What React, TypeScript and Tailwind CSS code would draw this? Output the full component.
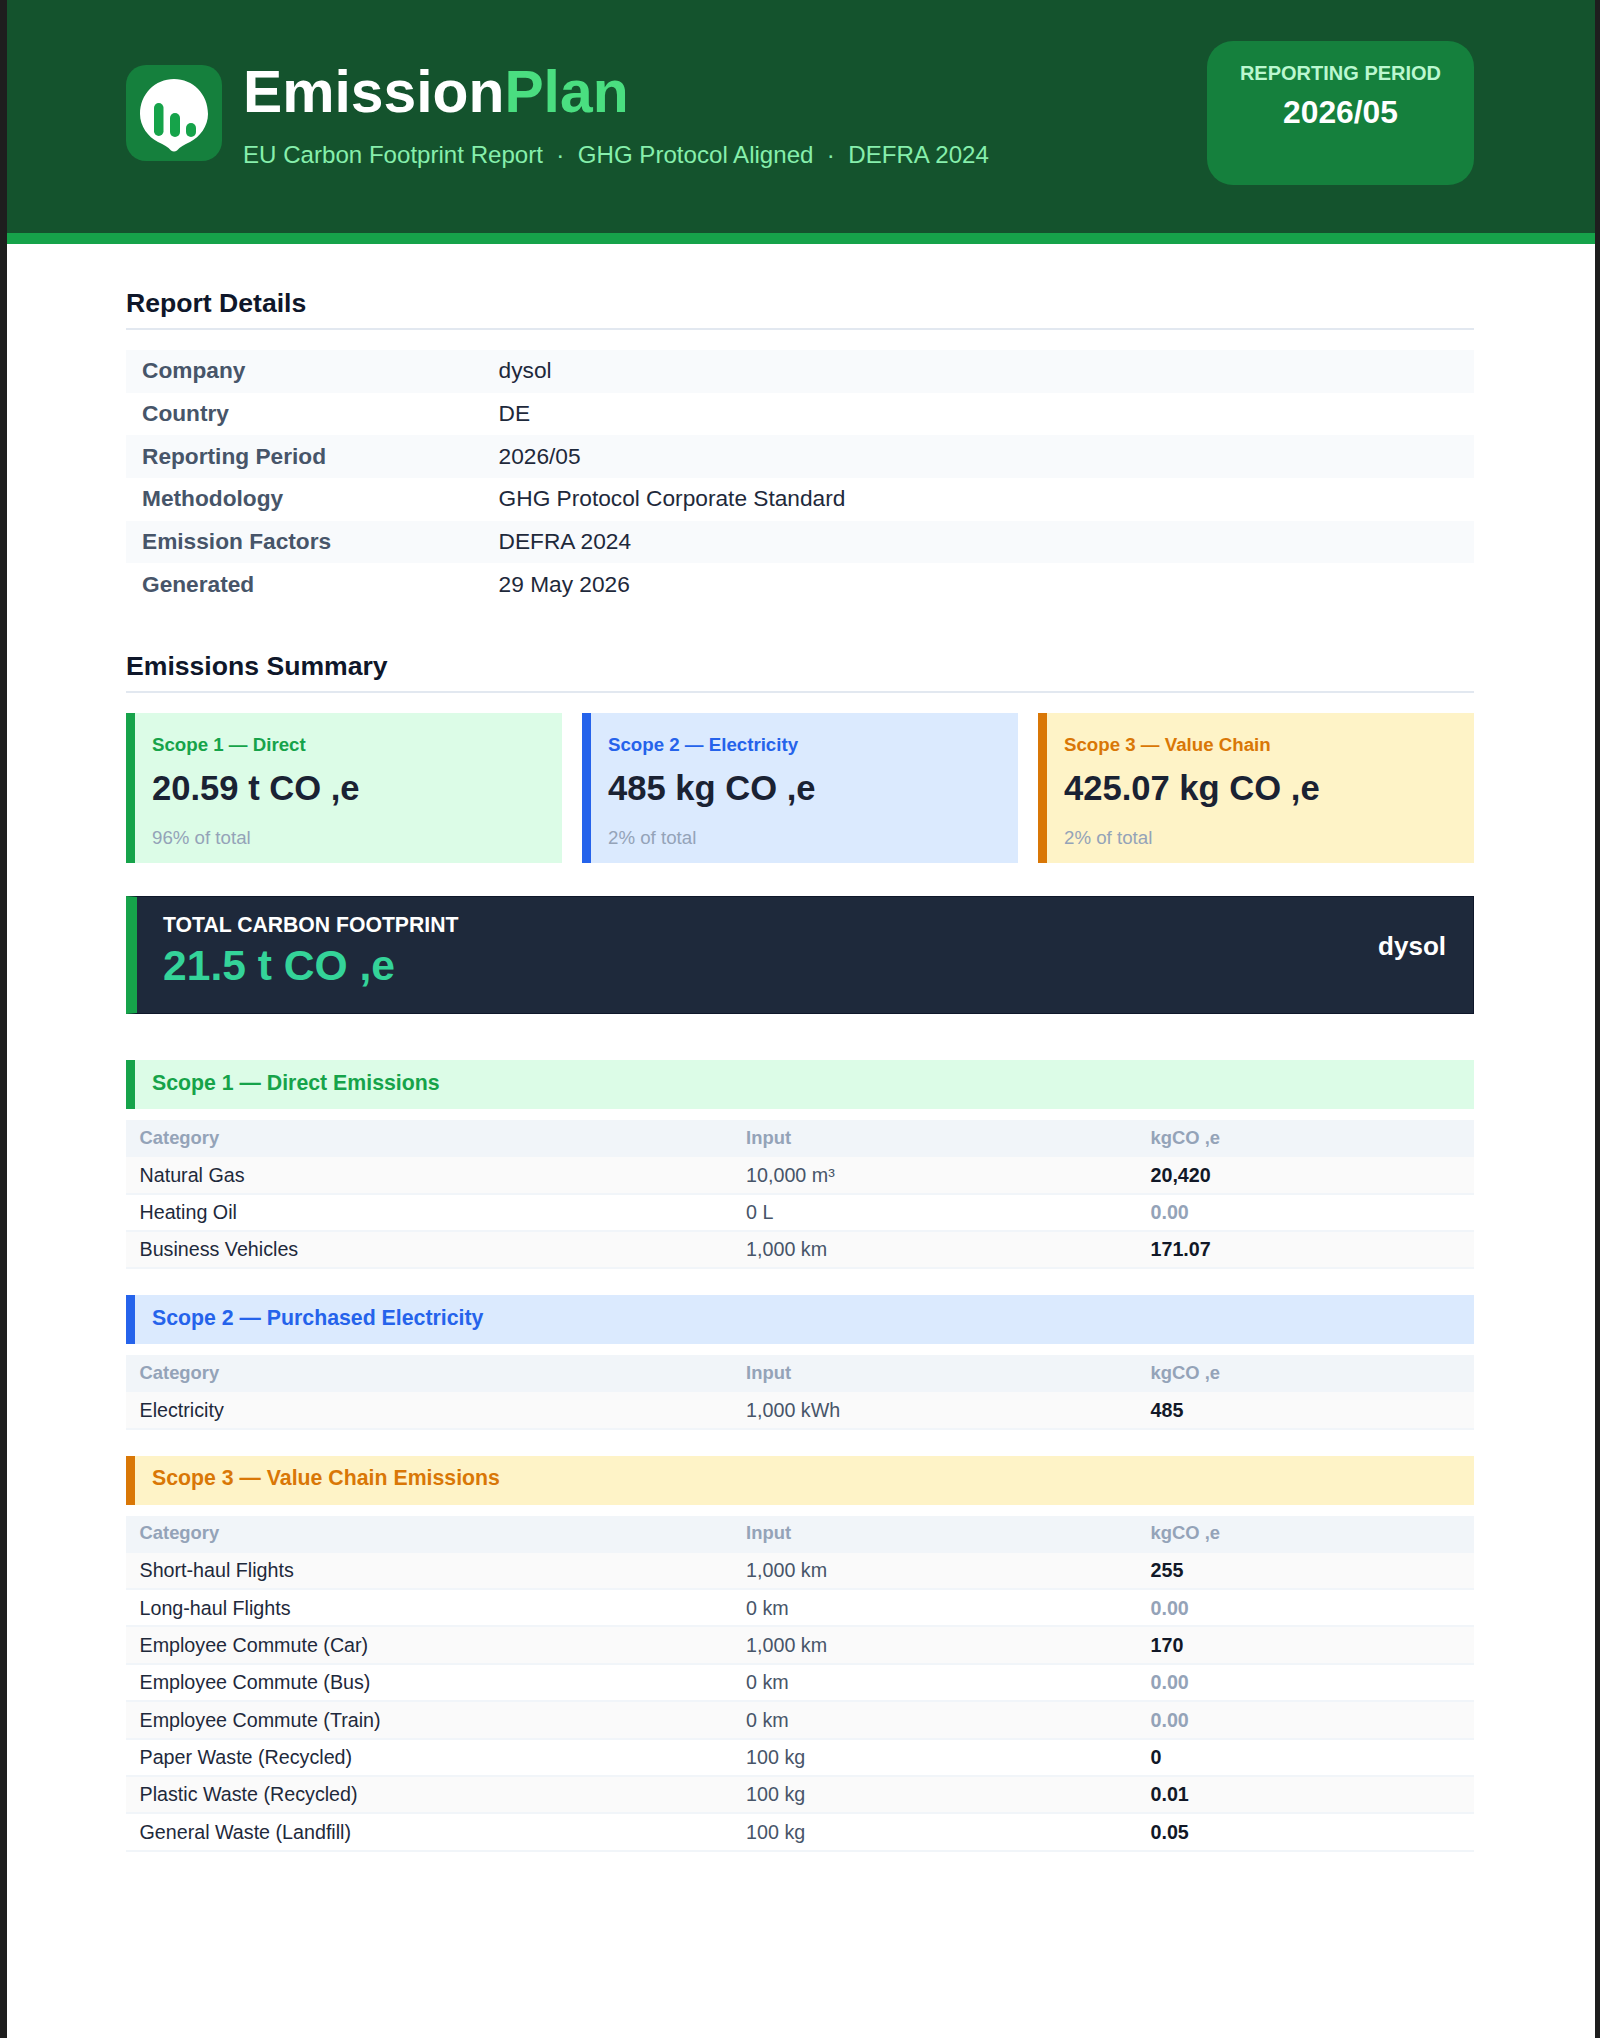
import React from 'react';

const details = [
  ['Company', 'dysol'],
  ['Country', 'DE'],
  ['Reporting Period', '2026/05'],
  ['Methodology', 'GHG Protocol Corporate Standard'],
  ['Emission Factors', 'DEFRA 2024'],
  ['Generated', '29 May 2026'],
];

const scope1 = [
  ['Natural Gas', '10,000 m³', '20,420'],
  ['Heating Oil', '0 L', '0.00'],
  ['Business Vehicles', '1,000 km', '171.07'],
];
const scope2 = [['Electricity', '1,000 kWh', '485']];
const scope3 = [
  ['Short-haul Flights', '1,000 km', '255'],
  ['Long-haul Flights', '0 km', '0.00'],
  ['Employee Commute (Car)', '1,000 km', '170'],
  ['Employee Commute (Bus)', '0 km', '0.00'],
  ['Employee Commute (Train)', '0 km', '0.00'],
  ['Paper Waste (Recycled)', '100 kg', '0'],
  ['Plastic Waste (Recycled)', '100 kg', '0.01'],
  ['General Waste (Landfill)', '100 kg', '0.05'],
];

function Logo() {
  return (
    <svg width="96" height="96" viewBox="0 0 96 96" className="shrink-0">
      <rect width="96" height="96" rx="20" fill="#15803d" />
      <path
        d="M48 14C67 14 82 29 82 49C82 61 74 72 64 77C58 80 54 82 51 85.5Q48 87.5 45 85.5C42 82 38 80 32 77C22 72 14 61 14 49C14 29 29 14 48 14Z"
        fill="#ffffff"
      />
      <rect x="28" y="38" width="9.5" height="33" rx="4.75" fill="#16a34a" />
      <rect x="44" y="48" width="10" height="24" rx="5" fill="#16a34a" />
      <rect x="60" y="58" width="10" height="14" rx="5" fill="#16a34a" />
    </svg>
  );
}

function SectionTitle({ children }: { children: React.ReactNode }) {
  return (
    <h2 className="h-[43px] border-b-2 border-[#e2e8f0] pt-[1px] text-[26.6px] leading-[30px] font-bold text-[#0f172a]">
      {children}
    </h2>
  );
}

function ScopeCard({ label, value, share, box, labelColor }: { label: string; value: string; share: string; box: string; labelColor: string }) {
  return (
    <div className={`h-[150px] border-l-[9px] pl-[17px] pt-[20px] ${box}`}>
      <div className={`text-[18.7px] leading-[24px] font-bold ${labelColor}`}>{label}</div>
      <div className="mt-[11px] text-[34.6px] leading-[40px] font-bold text-[#1a2233]">{value}</div>
      <div className="mt-[18px] text-[18.7px] leading-[24px] text-[#94a3b8]">{share}</div>
    </div>
  );
}

function ScopeTable({ title, rows, head }: { title: string; rows: string[][]; head: string }) {
  return (
    <section className="mb-[26px]">
      <div className={`flex h-[49px] items-center border-l-[9px] pb-[2px] pl-[17px] text-[21.3px] font-bold ${head}`}>{title}</div>
      <div className="mt-[11px] grid h-[37px] grid-cols-[45%_30%_25%] items-center bg-[#f1f5f9] pb-[2px] text-[18.4px] font-bold text-[#94a3b8]">
        <div className="pl-[13.5px]">Category</div>
        <div className="pl-[13.5px]">Input</div>
        <div className="pl-[13.5px]">kgCO ,e</div>
      </div>
      {rows.map((row, i) => (
        <div
          key={row[0]}
          className={`grid h-[37.4px] grid-cols-[45%_30%_25%] items-center border-b-2 border-[#f1f5f9] pt-[1px] text-[19.7px] ${i % 2 === 0 ? 'bg-[#fafafa]' : 'bg-white'}`}
        >
          <div className="pl-[13.5px] text-[#1e293b]">{row[0]}</div>
          <div className="pl-[13.5px] text-[#475569]">{row[1]}</div>
          <div className={`pl-[13.5px] font-bold ${row[2] === '0.00' ? 'text-[#94a3b8]' : 'text-[#111827]'}`}>{row[2]}</div>
        </div>
      ))}
    </section>
  );
}

export default function App() {
  return (
    <div className="min-h-[2038px] bg-[#1e1e1e] pl-[6.5px] pr-[5px] font-['Liberation_Sans',Arial,sans-serif]">
      <div className="min-h-[2038px] bg-white">
        {/* Header */}
        <header className="flex h-[244px] justify-between border-b-[11px] border-[#16a34a] bg-[#14532d] pl-[119.5px] pr-[121px]">
          <div className="flex items-start gap-[21px] pt-[65px]">
            <Logo />
            <div>
              <h1 className="-mt-[8px] text-[58.8px] leading-[70px] font-bold text-white">
                Emission<span className="text-[#4ade80]">Plan</span>
              </h1>
              <p className="mt-[13px] text-[24.1px] leading-[30px] text-[#86efac]">
                EU Carbon Footprint Report &nbsp;·&nbsp; GHG Protocol Aligned &nbsp;·&nbsp; DEFRA 2024
              </p>
            </div>
          </div>
          <div className="mt-[41px] h-[144px] w-[267px] rounded-[26px] bg-[#15803d] pt-[20px] text-center">
            <div className="text-[20px] leading-[24px] font-semibold text-[#bbf7d0]">REPORTING PERIOD</div>
            <div className="mt-[7px] text-[31.8px] leading-[40px] font-bold text-white">2026/05</div>
          </div>
        </header>

        <main className="pl-[119.5px] pr-[121px] pt-[43px]">
          {/* Report details */}
          <SectionTitle>Report Details</SectionTitle>
          <div className="mt-[20px]">
            {details.map(([k, v], i) => (
              <div key={k} className={`flex h-[42.7px] items-center pb-[2px] text-[22.7px] ${i % 2 === 0 ? 'bg-[#f8fafc]' : 'bg-white'}`}>
                <div className="w-[372.6px] pl-[16px] font-bold text-[#475569]">{k}</div>
                <div className="text-[#1e293b]">{v}</div>
              </div>
            ))}
          </div>

          {/* Emissions summary */}
          <div className="mt-[44px]">
            <SectionTitle>Emissions Summary</SectionTitle>
          </div>
          <div className="mt-[20px] grid grid-cols-3 gap-[20px]">
            <ScopeCard label="Scope 1 — Direct" value="20.59 t CO ,e" share="96% of total" box="border-[#16a34a] bg-[#dcfce7]" labelColor="text-[#16a34a]" />
            <ScopeCard label="Scope 2 — Electricity" value="485 kg CO ,e" share="2% of total" box="border-[#2563eb] bg-[#dbeafe]" labelColor="text-[#2563eb]" />
            <ScopeCard label="Scope 3 — Value Chain" value="425.07 kg CO ,e" share="2% of total" box="border-[#d97706] bg-[#fef3c7]" labelColor="text-[#d97706]" />
          </div>

          {/* Total */}
          <div className="mt-[33px] flex h-[118px] items-start justify-between border border-l-[11.5px] border-[#0f172a] border-l-[#16a34a] bg-[#1e293b] pl-[26px] pr-[27px] pt-[15px]">
            <div>
              <div className="text-[21.2px] leading-[26px] font-bold text-white">TOTAL CARBON FOOTPRINT</div>
              <div className="mt-[1px] text-[42.6px] leading-[52px] font-bold text-[#34d399]">21.5 t CO ,e</div>
            </div>
            <div className="mt-[19px] text-[26px] leading-[30px] font-bold text-white">dysol</div>
          </div>

          <div className="mt-[46px]">
            <ScopeTable title="Scope 1 — Direct Emissions" rows={scope1} head="border-[#16a34a] bg-[#dcfce7] text-[#16a34a]" />
            <ScopeTable title="Scope 2 — Purchased Electricity" rows={scope2} head="border-[#2563eb] bg-[#dbeafe] text-[#2563eb]" />
            <ScopeTable title="Scope 3 — Value Chain Emissions" rows={scope3} head="border-[#d97706] bg-[#fef3c7] text-[#d97706]" />
          </div>
        </main>
      </div>
    </div>
  );
}
